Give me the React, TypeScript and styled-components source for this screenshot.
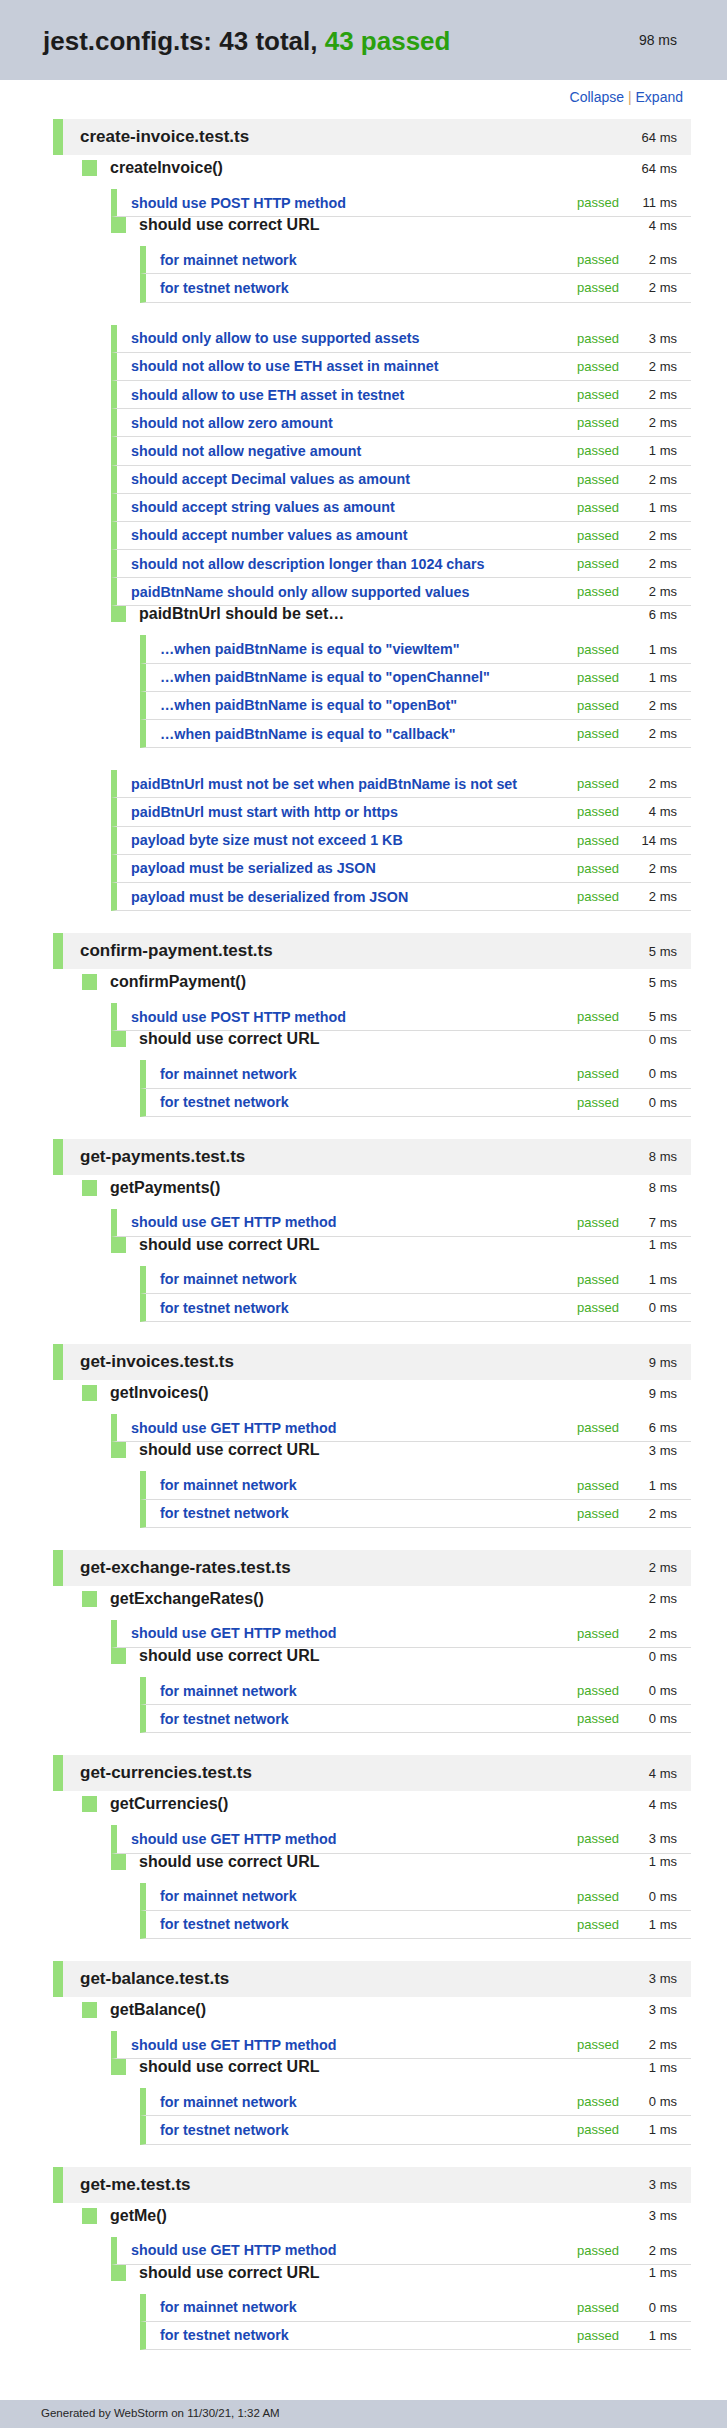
import React from "react";
import styled, { createGlobalStyle } from "styled-components";

type TestNode = { kind: "test"; name: string; ms: number };
type SuiteNode = { kind: "suite"; name: string; ms: number; children: Node[] };
type Node = TestNode | SuiteNode;
type FileNode = { name: string; ms: number; suite: SuiteNode };

const t = (name: string, ms: number): TestNode => ({ kind: "test", name, ms });
const s = (name: string, ms: number, children: Node[]): SuiteNode => ({ kind: "suite", name, ms, children });

const simpleFile = (file: string, fn: string, total: number, method: string, methodMs: number, urlMs: number, main: number, test: number): FileNode => ({
  name: file,
  ms: total,
  suite: s(fn, total, [
    t(`should use ${method} HTTP method`, methodMs),
    s("should use correct URL", urlMs, [t("for mainnet network", main), t("for testnet network", test)]),
  ]),
});

const files: FileNode[] = [
  {
    name: "create-invoice.test.ts",
    ms: 64,
    suite: s("createInvoice()", 64, [
      t("should use POST HTTP method", 11),
      s("should use correct URL", 4, [t("for mainnet network", 2), t("for testnet network", 2)]),
      t("should only allow to use supported assets", 3),
      t("should not allow to use ETH asset in mainnet", 2),
      t("should allow to use ETH asset in testnet", 2),
      t("should not allow zero amount", 2),
      t("should not allow negative amount", 1),
      t("should accept Decimal values as amount", 2),
      t("should accept string values as amount", 1),
      t("should accept number values as amount", 2),
      t("should not allow description longer than 1024 chars", 2),
      t("paidBtnName should only allow supported values", 2),
      s("paidBtnUrl should be set…", 6, [
        t('…when paidBtnName is equal to "viewItem"', 1),
        t('…when paidBtnName is equal to "openChannel"', 1),
        t('…when paidBtnName is equal to "openBot"', 2),
        t('…when paidBtnName is equal to "callback"', 2),
      ]),
      t("paidBtnUrl must not be set when paidBtnName is not set", 2),
      t("paidBtnUrl must start with http or https", 4),
      t("payload byte size must not exceed 1 KB", 14),
      t("payload must be serialized as JSON", 2),
      t("payload must be deserialized from JSON", 2),
    ]),
  },
  simpleFile("confirm-payment.test.ts", "confirmPayment()", 5, "POST", 5, 0, 0, 0),
  simpleFile("get-payments.test.ts", "getPayments()", 8, "GET", 7, 1, 1, 0),
  simpleFile("get-invoices.test.ts", "getInvoices()", 9, "GET", 6, 3, 1, 2),
  simpleFile("get-exchange-rates.test.ts", "getExchangeRates()", 2, "GET", 2, 0, 0, 0),
  simpleFile("get-currencies.test.ts", "getCurrencies()", 4, "GET", 3, 1, 0, 1),
  simpleFile("get-balance.test.ts", "getBalance()", 3, "GET", 2, 1, 0, 1),
  simpleFile("get-me.test.ts", "getMe()", 3, "GET", 2, 1, 0, 1),
];

const GREEN = "#97df7b";

const GlobalStyle = createGlobalStyle`
  html, body {
    margin: 0;
    padding: 0;
    background: #ffffff;
  }
  body {
    font-family: "Liberation Sans", Arial, sans-serif;
    color: #222222;
  }
`;

const Header = styled.header`
  display: flex;
  align-items: center;
  justify-content: space-between;
  height: 80px;
  padding: 0 50px 0 43px;
  background: #c7cdd9;
`;

const Title = styled.h1`
  margin: 0;
  font-size: 26px;
  font-weight: bold;
  color: #1c1c1c;
  padding-top: 2px;
`;

const PassedCount = styled.span`
  color: #2aa00e;
`;

const HeaderTime = styled.span`
  font-size: 14px;
  color: #222222;
`;

const Toolbar = styled.div`
  padding: 8px 44px 13px 0;
  line-height: 18px;
  font-size: 14px;
  text-align: right;
`;

const ToolLink = styled.a`
  color: #2456c2;
  text-decoration: none;
  cursor: pointer;
`;

const Separator = styled.span`
  color: #d4a15e;
`;

const Main = styled.main`
  padding: 0 36px 28px 53px;
`;

const FileBlock = styled.section``;

const FileHeader = styled.div`
  display: flex;
  align-items: center;
  height: 36px;
  padding: 0 14px 0 17px;
  background: #f1f1f1;
  border-left: 10px solid ${GREEN};
`;

const FileName = styled.span`
  flex: 1;
  font-size: 17px;
  font-weight: bold;
  color: #1c1c1c;
`;

const Duration = styled.span`
  width: 58px;
  flex-shrink: 0;
  text-align: right;
  font-size: 13px;
  color: #262626;
`;

const Children = styled.div<{ $top: number }>`
  margin: ${(p) => p.$top}px 0 22px 29px;
`;

const SuiteBlock = styled.div``;

const SuiteHeader = styled.div`
  display: flex;
  align-items: center;
  height: 16px;
  padding-right: 14px;
`;

const SuiteMark = styled.span`
  width: 15px;
  height: 16px;
  flex-shrink: 0;
  margin-right: 13px;
  background: ${GREEN};
`;

const SuiteName = styled.span`
  flex: 1;
  font-size: 16px;
  line-height: 16px;
  font-weight: bold;
  color: #1c1c1c;
`;

const TestRow = styled.div`
  display: flex;
  align-items: center;
  box-sizing: border-box;
  height: 28.2px;
  padding: 0 14px;
  border-left: 6px solid ${GREEN};
  border-bottom: 1px solid #dcdcdc;
`;

const TestName = styled.span`
  flex: 1;
  font-size: 14.3px;
  font-weight: bold;
  color: #1a48b6;
  white-space: nowrap;
`;

const Status = styled.span`
  font-size: 13px;
  color: #45ae27;
`;

const Footer = styled.footer`
  height: 28px;
  box-sizing: border-box;
  padding: 5px 0 0 41px;
  background: #c7cdd9;
  font-size: 11.5px;
  line-height: 16px;
  color: #262626;
`;

const TreeNode: React.FC<{ node: Node }> = ({ node }) => {
  if (node.kind === "test") {
    return (
      <TestRow>
        <TestName>{node.name}</TestName>
        <Status>passed</Status>
        <Duration>{node.ms} ms</Duration>
      </TestRow>
    );
  }
  return (
    <SuiteBlock>
      <SuiteHeader>
        <SuiteMark />
        <SuiteName>{node.name}</SuiteName>
        <Duration>{node.ms} ms</Duration>
      </SuiteHeader>
      <Children $top={13}>
        {node.children.map((c, i) => (
          <TreeNode key={i} node={c} />
        ))}
      </Children>
    </SuiteBlock>
  );
};

export default function App() {
  return (
    <>
      <GlobalStyle />
      <Header>
        <Title>
          jest.config.ts: 43 total, <PassedCount>43 passed</PassedCount>
        </Title>
        <HeaderTime>98 ms</HeaderTime>
      </Header>
      <Toolbar>
        <ToolLink>Collapse</ToolLink> <Separator>|</Separator> <ToolLink>Expand</ToolLink>
      </Toolbar>
      <Main>
        {files.map((f) => (
          <FileBlock key={f.name}>
            <FileHeader>
              <FileName>{f.name}</FileName>
              <Duration>{f.ms} ms</Duration>
            </FileHeader>
            <Children $top={5}>
              <TreeNode node={f.suite} />
            </Children>
          </FileBlock>
        ))}
      </Main>
      <Footer>Generated by WebStorm on 11/30/21, 1:32 AM</Footer>
    </>
  );
}
